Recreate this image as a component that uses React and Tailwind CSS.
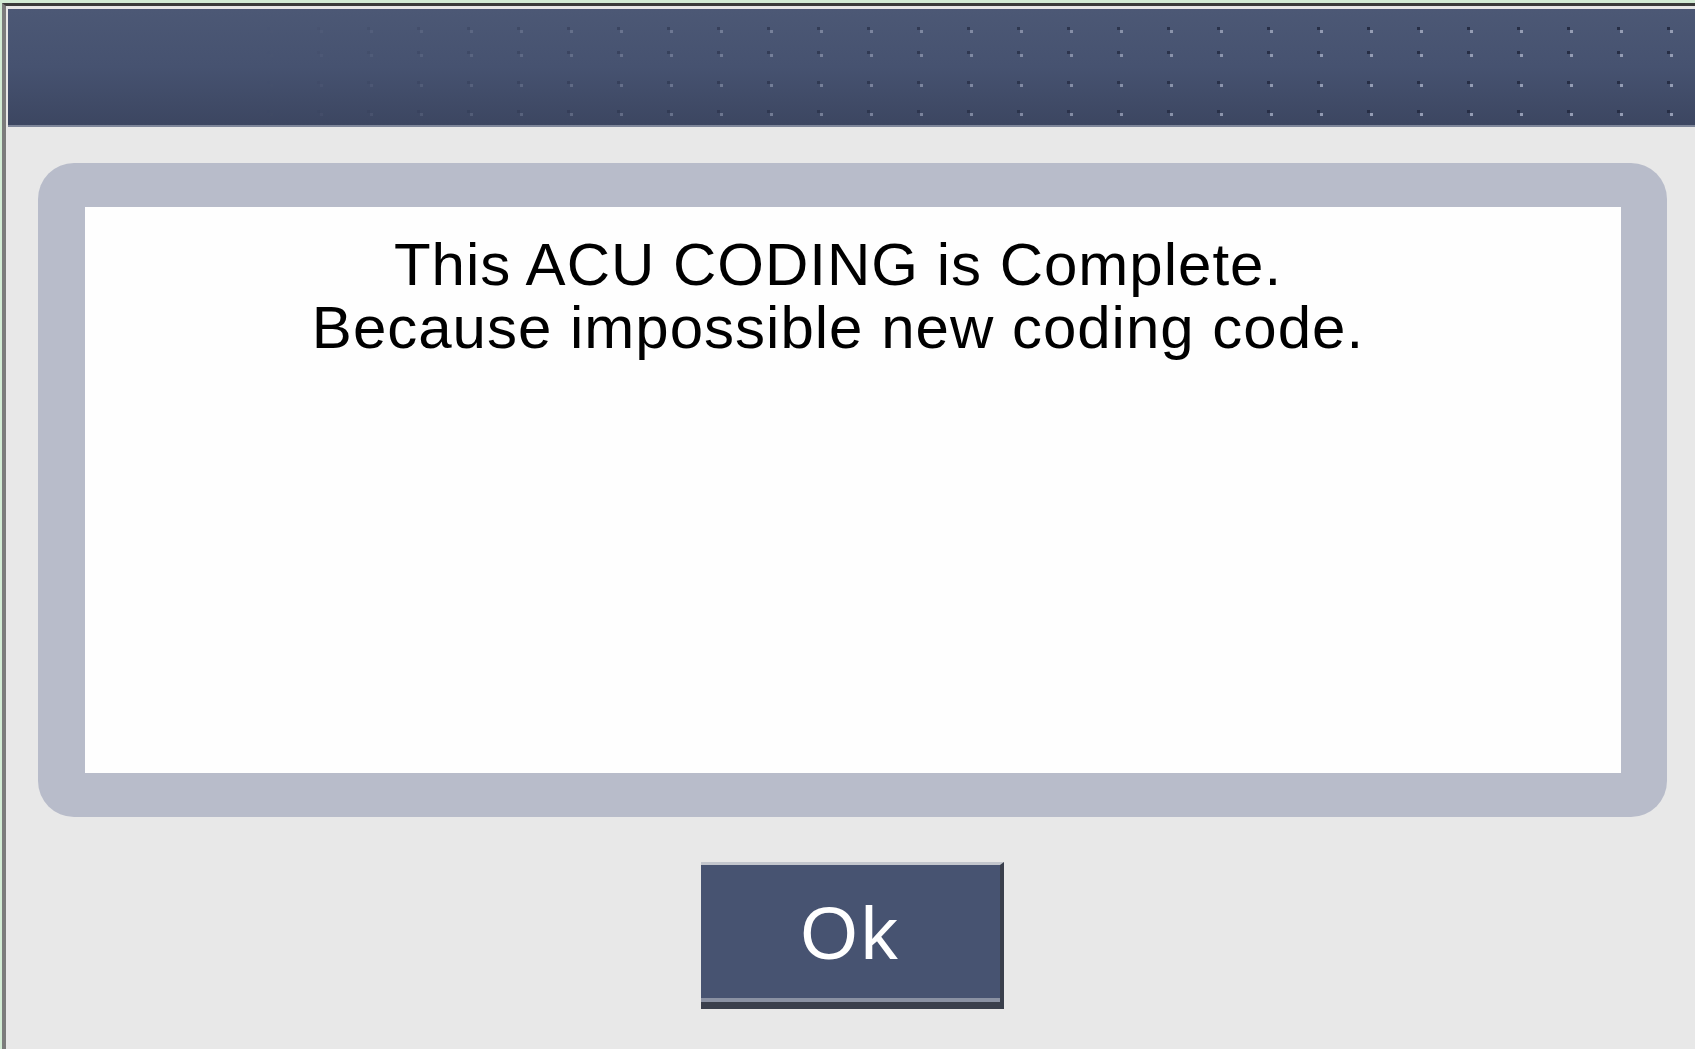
import React from "react";

function HeaderDots() {
  const rows = [21, 45, 75, 104];
  const cols = [];
  for (let x = 12; x < 1700; x += 50) cols.push(x);
  return (
    <svg className="absolute inset-0" width="1687" height="118" viewBox="0 0 1687 118">
      <defs>
        <linearGradient id="fade" x1="0" y1="0" x2="1687" y2="0" gradientUnits="userSpaceOnUse">
          <stop offset="0.15" stopColor="#fff" stopOpacity="0" />
          <stop offset="0.45" stopColor="#fff" stopOpacity="0.6" />
          <stop offset="0.8" stopColor="#fff" stopOpacity="1" />
        </linearGradient>
        <mask id="fadeMask">
          <rect x="0" y="0" width="1687" height="118" fill="url(#fade)" />
        </mask>
      </defs>
      <g mask="url(#fadeMask)">
        {rows.map((y) =>
          cols.map((x) => (
            <g key={`${x}-${y}`}>
              <rect x={x - 3} y={y - 3} width="3" height="3" fill="#262d44" />
              <rect x={x} y={y} width="3" height="3" fill="#959db4" />
            </g>
          ))
        )}
      </g>
    </svg>
  );
}

export default function App() {
  return (
    <div className="w-[1695px] h-[1049px] overflow-hidden bg-[#d3ecd5] pt-[3px] pl-[2px]">
      <div className="h-full flex flex-col bg-[#e8e8e8] border-t-[3px] border-t-[#3b3b3b] border-l-[4px] border-l-[#7c7c7c]">
        <div className="relative mt-[3px] ml-[2px] h-[118px] bg-gradient-to-b from-[#4c5875] via-[#465270] to-[#3c4661] border-b-[2px] border-b-[#7e869a] overflow-hidden">
          <HeaderDots />
        </div>
        <div className="mt-[36px] ml-[32px] w-[1629px] h-[654px] rounded-[36px] bg-[#b8bcca] pt-[44px] pl-[47px] pr-[46px] pb-[44px]">
          <div
            className="h-full w-full bg-[#fefefe] pt-[26px] pr-[30px] text-center text-black text-[60px] leading-[63px] tracking-[1px]"
            style={{ fontFamily: '"Liberation Sans", Arial, sans-serif' }}
          >
            <div>This ACU CODING is Complete.</div>
            <div>Because impossible new coding code.</div>
          </div>
        </div>
        <div className="mt-[45px] ml-[32px] w-[1629px] flex justify-center">
          <div
            className="w-[303px] h-[147px] flex items-center justify-center bg-[#475371] border-t-[3px] border-t-[#c3c6cd] border-r-[4px] border-r-[#3a3f4c] border-b-[7px] border-b-[#3a3f4c] shadow-[inset_0_-4px_0_#8a91a3] text-white text-[74px] leading-none tracking-[3px]"
            style={{ fontFamily: '"Liberation Sans", Arial, sans-serif' }}
          >
            Ok
          </div>
        </div>
      </div>
    </div>
  );
}
